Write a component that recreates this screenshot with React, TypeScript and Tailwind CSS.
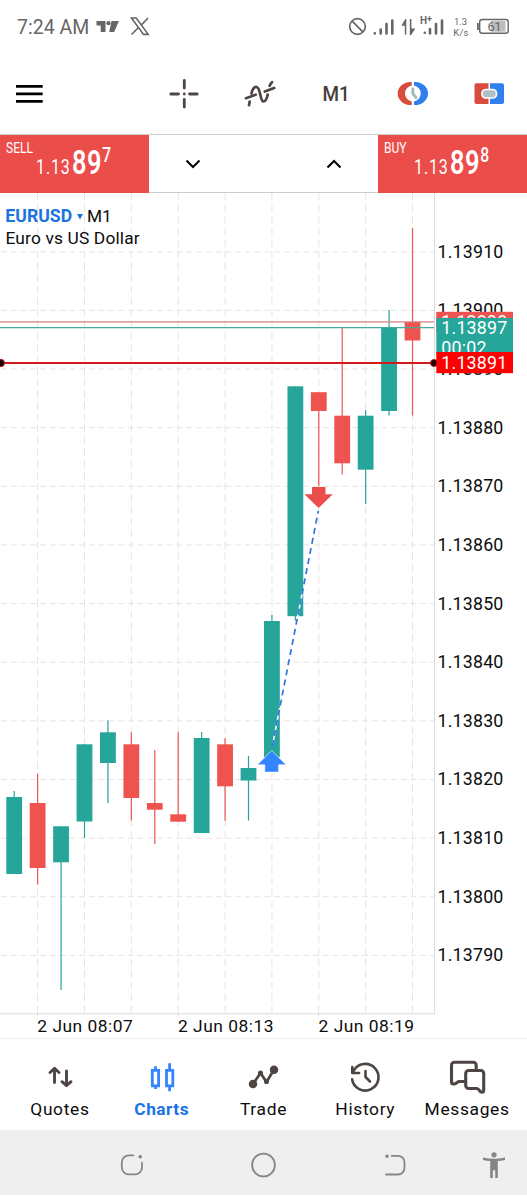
import React from "react";

type Candle = { up: boolean; top: number; bottom: number; high: number; low: number };

const TEAL = "#26a69a";
const RED = "#ef5350";

const candles: Candle[] = [
  { up: true, top: 797, bottom: 874, high: 791, low: 874 },
  { up: false, top: 803, bottom: 868, high: 773.5, low: 884.5 },
  { up: true, top: 826.3, bottom: 862.3, high: 826, low: 990 },
  { up: true, top: 744.3, bottom: 821.5, high: 744, low: 838 },
  { up: true, top: 732.3, bottom: 763, high: 720.3, low: 803 },
  { up: false, top: 744.3, bottom: 798, high: 732.3, low: 820.5 },
  { up: false, top: 803, bottom: 809.7, high: 750, low: 844 },
  { up: false, top: 814.3, bottom: 821.7, high: 732.3, low: 821.5 },
  { up: true, top: 738, bottom: 833, high: 732, low: 833 },
  { up: false, top: 744.3, bottom: 786.3, high: 738, low: 820.7 },
  { up: true, top: 768, bottom: 780.5, high: 756, low: 820.5 },
  { up: true, top: 621, bottom: 757, high: 615, low: 757 },
  { up: true, top: 386.3, bottom: 616.2, high: 386.3, low: 620.7 },
  { up: false, top: 392.2, bottom: 411, high: 392.2, low: 486 },
  { up: false, top: 415.7, bottom: 463.3, high: 328, low: 474.5 },
  { up: true, top: 415.7, bottom: 469.7, high: 410, low: 504 },
  { up: true, top: 327.7, bottom: 411, high: 310, low: 415.5 },
  { up: false, top: 322, bottom: 340.5, high: 228, low: 415.5 },
];

const prices = Array.from({ length: 13 }, (_, i) => ({
  label: (1.1391 - i * 0.0001).toFixed(5),
  y: 251.8 + i * 58.63,
}));

const columns = Array.from({ length: 9 }, (_, i) => 37.6 + i * 46.87);

const AXIS = "text-[17.8px] tracking-[0.2px]";

function PriceChart() {
  return (
    <svg width="527" height="845" viewBox="0 193 527 845" className="block font-['Roboto',sans-serif]">
      <g stroke="#e4e4e4" strokeWidth="1" strokeDasharray="6 3.75">
        {prices.map((p) => (
          <line key={p.label} x1="1" x2="434" y1={p.y} y2={p.y} />
        ))}
        {columns.map((x) => (
          <line key={x} x1={x} x2={x} y1="193" y2="1013" strokeDasharray="7.6 4" />
        ))}
      </g>
      <path d="M434.6 193V1013.8H0" fill="none" stroke="#d8d8d8" strokeWidth="1" />
      <path d="M37.6 1013v3M178 1013v3M318.6 1013v3" stroke="#dedede" />
      {prices.map((p) => (
        <text key={p.label} x="437.5" y={p.y + 6} fill="#0c0c0c" className={AXIS}>
          {p.label}
        </text>
      ))}
      {candles.map((c, i) => {
        const x = 14.2 + i * 23.43;
        const fill = c.up ? TEAL : RED;
        return (
          <g key={i} fill={fill}>
            <rect x={x - 0.6} y={c.high} width="1.2" height={c.low - c.high} />
            <rect x={x - 7.9} y={c.top} width="15.8" height={c.bottom - c.top} />
          </g>
        );
      })}
      <line x1="0" x2="434" y1="321.8" y2="321.8" stroke="#d9807e" strokeWidth="1.3" />
      <line x1="0" x2="434" y1="327.7" y2="327.7" stroke="#45ab9f" strokeWidth="1.3" />
      <line x1="0" x2="434" y1="363" y2="363" stroke="#d3191c" strokeWidth="1.9" />
      <circle cx="0.8" cy="363" r="3.7" fill="#180000" stroke="#c2181b" strokeWidth="1" />
      <circle cx="434" cy="363" r="3.5" fill="#180000" stroke="#c2181b" strokeWidth="1" />
      <path d="M272.8 744L279.7 708M296.6 622L302.9 590" stroke="#fff" strokeWidth="1.5" />
      <line x1="272.3" y1="746" x2="318.3" y2="511" stroke="#3372e3" strokeWidth="1.7" strokeDasharray="6 4.3" />
      <path d="M312 487h13.5v7.3h7.3L318.6 508l-14.2-13.7h7.6z" fill="#eb4d4b" />
      <path d="M271.7 750.5L286.2 764.8h-7.6v7.3h-13.8v-7.3h-7.4z" fill="#3285ff" stroke="#fff" strokeWidth="0.6" />
      <rect x="436.3" y="311.8" width="76.7" height="20" fill="#ef5350" />
      <text x="441.3" y="328.3" fill="#fff" className={AXIS}>1.13898</text>
      <rect x="436.3" y="318" width="76.7" height="36" fill={TEAL} />
      <text x="441.3" y="334" fill="#fff" className={AXIS}>1.13897</text>
      <text x="441.3" y="354" fill="#fff" className={AXIS}>00:02</text>
      <rect x="436.3" y="352" width="76.7" height="21.2" fill="#ff0000" />
      <text x="441.3" y="369" fill="#fff" className={AXIS}>1.13891</text>
      <g fill="#0c0c0c" className="text-[17.4px] tracking-[0.5px]">
        <text x="37.3" y="1031.7">2 Jun 08:07</text>
        <text x="178" y="1031.7">2 Jun 08:13</text>
        <text x="318.6" y="1031.7">2 Jun 08:19</text>
      </g>
      <text x="5.3" y="222.3" fill="#1a73e0" className="text-[17.6px] font-bold tracking-[0.05px]">EURUSD</text>
      <path d="M77 214h6l-3 5.5z" fill="#1a73e0" />
      <text x="87" y="222.3" fill="#0c0c0c" className="text-[17.3px]">M1</text>
      <text x="5.5" y="243.7" fill="#0c0c0c" className="text-[17.4px] tracking-[0.13px]">Euro vs US Dollar</text>
    </svg>
  );
}

function StatusBar() {
  return (
    <header className="flex h-[54px] items-center pl-[17px] text-[#666]">
      <span className="w-[79px] whitespace-nowrap pt-px text-[19.5px] leading-none">7:24 AM</span>
      <svg width="55" height="22" viewBox="96 16 55 22" fill="#666">
        <path d="M96.500 21h9v11h-4.800v-6.500h-4.200zM111.500 21h7.400l-4.700 11h-5z" />
        <circle cx="108.500" cy="23.200" r="2.100" />
        <path d="M131.500 18h4.700l12 16.400h-4.700zM148 18l-7 7.400M138.500 27.500l-7 7" fill="none" stroke="#666" strokeWidth="1.600" />
      </svg>
      <svg width="376" height="32" viewBox="151 11 376 32" fill="#666" className="font-['Roboto',sans-serif]">
        <circle cx="357.5" cy="26.5" r="7.8" fill="none" stroke="#666" strokeWidth="1.7" />
        <path d="M352.2 21.2l10.6 10.600" stroke="#666" strokeWidth="1.7" />
        <g stroke="#666" strokeWidth="2.6" strokeLinecap="round">
          <path d="M374.8 33.400v.1M380.700 29.500v4M386.500 24v9.500M392.300 20.500v13" />
          <path d="M424.800 32.700v.1M430 29v4.500M436 24v9.500M442 20.500v13" />
        </g>
        <path d="M406.300 34.500V19h-1l-3.500 6v.8h3V34.500zM409.800 19h1.600v9.500h3.500v.8l-4 6h-1.100z" />
        <text x="420" y="24" className="text-[10px] font-bold">H</text>
        <text x="427" y="21.5" className="text-[9px] font-bold">+</text>
        <text x="454" y="25" className="text-[9.5px]">1.3</text>
        <text x="453.3" y="36" className="text-[9.5px] tracking-[0.2px]">K/s</text>
        <rect x="491" y="21" width="14.5" height="10.7" fill="#bdbdbd" />
        <rect x="479.7" y="19.5" width="28.5" height="13.700" rx="2.5" fill="none" stroke="#666" strokeWidth="1.4" />
        <rect x="477" y="23" width="1.8" height="7" />
        <text x="487.5" y="31.2" className="text-[13px] tracking-[-0.500px]">61</text>
      </svg>
    </header>
  );
}

function Toolbar() {
  return (
    <nav className="flex h-20 items-center">
      <div className="w-[146px] pl-4">
        <svg width="27" height="20" viewBox="0 0 27 20" fill="#000">
          <path d="M0 1h26.7v2.8H0zM0 8.5h26.7v2.8H0zM0 16h26.7v2.8H0z" />
        </svg>
      </div>
      <div className="grid w-[381px] grid-cols-5 place-items-center">
        <svg width="32" height="32" viewBox="0 0 32 32" stroke="#4d4542" strokeWidth="2.8" strokeLinecap="round">
          <path d="M16.3 2.500v7.500M16.300 21.500V29M2.800 16h7.700M21.500 16h7.700M16.300 15.900v.2" />
        </svg>
        <svg width="34" height="32" viewBox="243 78 34 32" fill="none" stroke="#4d4542" strokeWidth="2.7" strokeLinecap="round" strokeLinejoin="round">
          <path d="M246 98.200l9.700-3.500M264.800 91.600l9.300-3.600M249 105.200l.7-3.600M251.500 93.500c1-4.500 3-6.800 5-6.500 4.500.800 3.300 14.500 7 14.500 2.400 0 3.500-3.500 4.200-7M269.700 85.800c.500-1.400 1.100-2.500 2.300-3.600" />
        </svg>
        <span className="scale-x-[0.9] pt-px text-[21px] font-medium leading-none text-[#443e3b]">M1</span>
        <svg width="32" height="28" viewBox="397 80 32 28">
          <path d="M411.700 82h-1a13 11.500 0 000 23h1v-3.600a8 8 0 010-15.800z" fill="#d84b3f" />
          <path d="M414 82h1a13 11.500 0 010 23h-1v-3.600a8 8 0 000-15.800z" fill="#2f80ed" />
          <path d="M412.800 89v4.500l3.200 4.200" fill="none" stroke="#a5b6be" strokeWidth="2.8" strokeLinecap="round" />
        </svg>
        <svg width="32" height="24" viewBox="473 82 32 24">
          <path d="M476.500 83.300h12V104h-12a2 2 0 01-2-2V85.300a2 2 0 012-2z" fill="#d84b3f" />
          <path d="M490 83.300h12a2 2 0 012 2V102a2 2 0 01-2 2h-12z" fill="#2f80ed" />
          <rect x="482" y="89.500" width="14.500" height="8.500" rx="3.800" fill="#b0bec5" stroke="#fff" strokeWidth="1.700" />
        </svg>
      </div>
    </nav>
  );
}

function Quote({ side, pip }: { side: string; pip: string }) {
  return (
    <button className="flex h-[58px] w-[149px] shrink-0 items-start bg-[#eb4d4b] pl-1.5 text-left text-white">
      <span className="w-[27px] origin-left scale-x-[0.78] pt-[5px] text-[15.5px] leading-4">{side}</span>
      <span className="flex origin-left scale-x-[0.78] items-baseline pl-[4px] pt-[12px] leading-8">
        <span className="w-[46px] text-[20.5px] tracking-[1px]">1.13</span>
        <span className="text-[32.5px] font-semibold tracking-[0.8px]">89</span>
        <span className="relative -top-[12px] text-[20px] font-medium leading-none">{pip}</span>
      </span>
    </button>
  );
}

function TradeBar() {
  return (
    <section className="flex h-[59px] border-t border-b border-[#ccc]">
      <Quote side="SELL" pip="7" />
      <div className="flex flex-1 items-center justify-between px-[36px]">
        <svg width="16" height="10" viewBox="0 0 16 10" fill="none" stroke="#000" strokeWidth="2"><path d="M1.500 1.500L8 8l6.500-6.500" /></svg>
        <svg width="16" height="10" viewBox="0 0 16 10" fill="none" stroke="#000" strokeWidth="2"><path d="M1.500 8.500L8 2l6.500 6.500" /></svg>
      </div>
      <Quote side="BUY" pip="8" />
    </section>
  );
}

const stroke = { fill: "none", stroke: "#4d4542", strokeLinecap: "round", strokeLinejoin: "round" } as const;

const tabs = [
  {
    label: "Quotes",
    icon: (
      <svg width="40" height="40" viewBox="39 1057 40 40" {...stroke} strokeWidth="2.9">
        <path d="M53.500 1082.500v-13.700M49 1072.500l4.500-4.200 4.500 4.200M65.500 1071v14.300M61 1081.700l4.500 4 4.500-4" />
      </svg>
    ),
  },
  {
    label: "Charts",
    active: true,
    icon: (
      <svg width="40" height="40" viewBox="141 1057 40 40" fill="none" stroke="#3285ff" strokeWidth="2.8">
        <path d="M151.300 1070.300h6.300v15.500h-6.300zM165.500 1070.300h6.300v15.500h-6.300zM154.500 1066.300v4M154.500 1086v3M168.600 1063.300v7M168.600 1086v5.300" />
      </svg>
    ),
  },
  {
    label: "Trade",
    icon: (
      <svg width="40" height="40" viewBox="243 1057 40 40" {...stroke} strokeWidth="2.7">
        <path d="M253 1084l7.500-11 6 9 7.300-12" />
        <circle cx="253" cy="1084" r="2.900" fill="#4d4542" />
        <circle cx="274" cy="1069.700" r="2.900" fill="#4d4542" />
        <circle cx="260.500" cy="1073" r="1.200" fill="#4d4542" />
        <circle cx="266.500" cy="1081.500" r="1.200" fill="#4d4542" />
      </svg>
    ),
  },
  {
    label: "History",
    icon: (
      <svg width="40" height="40" viewBox="345 1057 40 40" {...stroke} strokeWidth="2.6">
        <path d="M353.600 1070.800a13.300 13.300 0 11-1.500 8.500M352.300 1067v6h6.800M365.500 1071v6l4.500 4.500" />
      </svg>
    ),
  },
  {
    label: "Messages",
    icon: (
      <svg width="40" height="40" viewBox="447 1057 40 40" {...stroke} strokeWidth="3.1">
        <path d="M464 1081.500h-4.500c-2.500 0-3 2.500-6 2.500-1.700 0-2-1-2-2.300v-16.500a3 3 0 013-3h18.700a3 3 0 013 3v4M468.700 1070.500h12a3 3 0 013 3v16.700c0 1.300-.7 2-1.800 2-2.700 0-2.400-3.700-5.200-3.700h-8a3 3 0 01-3-3v-12a3 3 0 013-3z" />
      </svg>
    ),
  },
];

function TabBar() {
  return (
    <nav className="flex h-[92px] border-t border-[#eee] pl-[9px] pr-[9px]">
      {tabs.map((t) => (
        <div key={t.label} className="flex flex-1 flex-col items-center pt-[18px]">
          {t.icon}
          <span className={t.active ? "pt-[2px] text-[17.3px] font-bold leading-5 tracking-[0.5px] text-[#1a73e8]" : "pt-[2px] text-[17.4px] leading-5 tracking-[0.65px] text-[#0c0c0c]"}>
            {t.label}
          </span>
        </div>
      ))}
    </nav>
  );
}

function SystemBar() {
  return (
    <footer className="h-[65px] bg-[#efefef]">
      <svg width="527" height="65" viewBox="0 1130 527 65" fill="none" stroke="#858585" strokeWidth="1.8" strokeLinecap="round">
        <path d="M133.500 1155.300H129a7.200 7.200 0 00-7.200 7.200v4.700a7.200 7.200 0 007.200 7.200h5.800a7.200 7.200 0 007.200-7.200v-4.500" />
        <circle cx="140.200" cy="1156.800" r="0.900" fill="#858585" />
        <circle cx="263.500" cy="1165" r="11.400" />
        <path d="M391.700 1155.800h6.300a6.500 6.500 0 016.500 6.500v5.700a6.500 6.500 0 01-6.500 6.500h-12" />
        <circle cx="387" cy="1156.200" r="0.900" fill="#858585" />
        <g fill="#858585" stroke="none">
          <circle cx="494" cy="1154.800" r="2.600" />
          <path d="M483 1157.500q11 2.600 22 0v2.400q-4 1-7.200 1.200V1178h-2.600v-7.700h-2.400v7.700h-2.600v-16.900q-3.500-.2-7.200-1.200z" />
        </g>
      </svg>
    </footer>
  );
}

export default function App() {
  return (
    <main className="flex h-[1200px] w-[527px] flex-col overflow-hidden bg-white font-['Roboto',sans-serif]">
      <StatusBar />
      <Toolbar />
      <TradeBar />
      <PriceChart />
      <TabBar />
      <SystemBar />
    </main>
  );
}
